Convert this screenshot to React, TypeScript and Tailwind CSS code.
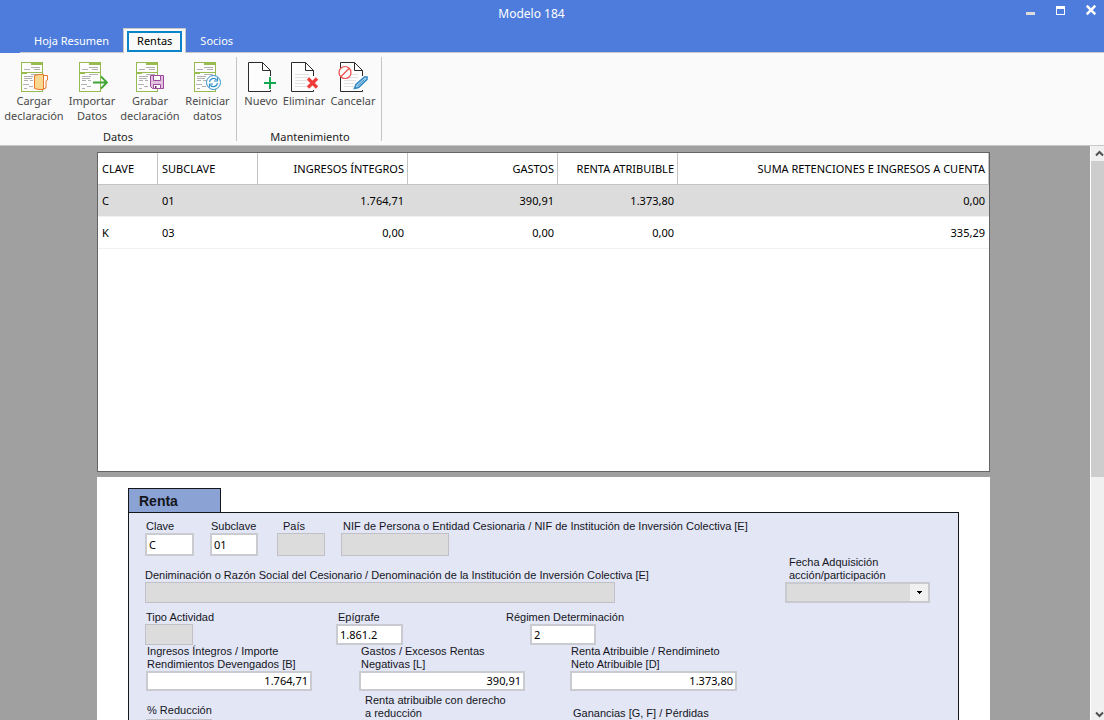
import React, { useState } from "react";

const uiFont = "font-['Noto_Sans',sans-serif]";
const formFont = "font-['Liberation_Sans',Arial,sans-serif]";

function Sheet({ viewBox = "0 0 32 30", children }: { viewBox?: string; children: React.ReactNode }) {
  return (
    <svg width="32" height="30" viewBox={viewBox} fill="none" aria-hidden="true">
      <rect x="3.5" y="0.5" width="21" height="29" fill="#fdfdfd" stroke="#98bb50" />
      <path d="M13 0h12v3H13z M3 10h22v1H3z M3 11h6v1H3z" fill="#98bb50" />
      <path
        d="M13 5.500h9M6 7.500h6M16 7.500h6M13 12.500h9M6 14.500h9M6 16.500h8M6 18.500h4M12 18.500h3M5 22.500h6M11 24.500h4M6 26.500h3"
        stroke="#b0b0b0"
      />
      {children}
    </svg>
  );
}

function BlankPage({ lines, children }: { lines?: boolean; children: React.ReactNode }) {
  return (
    <svg width="32" height="30" viewBox="0 0 32 30" fill="none" aria-hidden="true">
      <path d="M4 1h13l8 8v20H4z" fill="#fdfdfd" />
      <path d="M25.500 14V8.500L17.500 0.500H3.500v29h22V28" stroke="#2b2b2b" />
      <path d="M17.500 0.500v8h8" stroke="#2b2b2b" />
      {lines && <path d="M7 12.500h14M7 15.500h14M7 18.500h12M7 21.500h10M7 24.500h12" stroke="#e2e2e2" />}
      {children}
    </svg>
  );
}

const LoadIcon = () => (
  <Sheet>
    <path d="M25 13.500h4.500v4.500l-1.500 1v7l-3 1" fill="#fdfdfd" stroke="#e8752a" />
    <path d="M16.500 13.500l4.500-1h4.500v15H21l-4.500-1z" fill="#f7d88e" stroke="#e8752a" />
  </Sheet>
);
const ImportIcon = () => (
  <Sheet>
    <path d="M17 20.500h14M25 14.500l6 6-6 6" stroke="#3fa535" strokeWidth="1.800" />
  </Sheet>
);
const SaveIcon = () => (
  <Sheet viewBox="1 0 32 30">
    <path d="M17.500 13.500h13v13h-11l-2-2z" fill="#e3bfe0" stroke="#9c4a9c" />
    <path d="M20.500 13.500h7v5h-7z" fill="#fff" stroke="#9c4a9c" />
    <path d="M20.500 22.500h7v4h-7z" fill="#fff" stroke="#9c4a9c" />
    <path d="M22 24h1.500v2H22z" fill="#6c2a6c" />
  </Sheet>
);
const RefreshIcon = () => (
  <Sheet viewBox="1 0 32 30">
    <circle cx="22.500" cy="20.500" r="7" fill="#fff" stroke="#2f8fcb" />
    <path d="M18.500 20a4 4 0 0 1 7-2.200M26.500 21a4 4 0 0 1-7 2.200" stroke="#2f8fcb" strokeWidth="1.300" />
    <path d="M26.500 15.500v3.500H23M18.500 25.500V22H22" stroke="#2f8fcb" strokeWidth="1.200" />
  </Sheet>
);
const NewIcon = () => (
  <BlankPage>
    <path d="M25 15v12M19 21h12" stroke="#14a850" strokeWidth="2" />
  </BlankPage>
);
const DeleteIcon = () => (
  <BlankPage lines>
    <path d="M20 16.500l9 9M29 16.500l-9 9" stroke="#ee3c38" strokeWidth="3.200" />
  </BlankPage>
);
const CancelIcon = () => (
  <BlankPage lines>
    <circle cx="8" cy="10.500" r="6" fill="#fdfdfd" stroke="#ee4b48" strokeWidth="1.200" />
    <path d="M4 14.500l8-8" stroke="#ee4b48" strokeWidth="1.200" />
    <path d="M17.500 26.500l1.500-4 8.500-7.500 2.500 0v2.500l-8.500 8z" fill="#b9dcf2" stroke="#2d86c4" strokeWidth="1.500" />
    <path d="M20.500 24l7-6.500" stroke="#2d86c4" />
  </BlankPage>
);

type Action = { lines: string[]; icon: React.ReactNode; width: string };

const groups: { title: string; pad: string; titlePad: string; actions: Action[] }[] = [
  {
    title: "Datos",
    pad: "pl-[5px]",
    titlePad: "pr-[5px]",
    actions: [
      { lines: ["Cargar", "declaración"], icon: <LoadIcon />, width: "w-[58px]" },
      { lines: ["Importar", "Datos"], icon: <ImportIcon />, width: "w-[58px]" },
      { lines: ["Grabar", "declaración"], icon: <SaveIcon />, width: "w-[58px]" },
      { lines: ["Reiniciar", "datos"], icon: <RefreshIcon />, width: "w-[57px]" },
    ],
  },
  {
    title: "Mantenimiento",
    pad: "pl-0.5",
    titlePad: "",
    actions: [
      { lines: ["Nuevo"], icon: <NewIcon />, width: "w-[44px]" },
      { lines: ["Eliminar"], icon: <DeleteIcon />, width: "w-[42px]" },
      { lines: ["Cancelar"], icon: <CancelIcon />, width: "w-[56px]" },
    ],
  },
];

const tabs = ["Hoja Resumen", "Rentas", "Socios"];

const columns = [
  { label: "CLAVE", width: "w-[60px]", align: "text-left" },
  { label: "SUBCLAVE", width: "w-[100px]", align: "text-left" },
  { label: "INGRESOS ÍNTEGROS", width: "w-[150px]", align: "text-right" },
  { label: "GASTOS", width: "w-[150px]", align: "text-right" },
  { label: "RENTA ATRIBUIBLE", width: "w-[120px]", align: "text-right" },
  { label: "SUMA RETENCIONES E INGRESOS A CUENTA", width: "", align: "text-right" },
];

const rows = [
  ["C", "01", "1.764,71", "390,91", "1.373,80", "0,00"],
  ["K", "03", "0,00", "0,00", "0,00", "335,29"],
];

type FieldProps = {
  id: string;
  label: React.ReactNode;
  value?: string;
  disabled?: boolean;
  right?: boolean;
  box: string;
  inset?: string;
  input: string;
};

function Field({ id, label, value = "", disabled, right, box, inset = "pl-px", input }: FieldProps) {
  return (
    <div className={`flex shrink-0 flex-col ${box}`}>
      <label htmlFor={id} className={`whitespace-nowrap text-[11px] leading-[13px] text-[#15151c] ${inset}`}>
        {label}
      </label>
      <input
        id={id}
        defaultValue={value}
        disabled={disabled}
        className={`px-0.5 pb-px text-[11px] leading-4 text-black outline-none ${uiFont} ${
          disabled ? "border border-[#c0c0c6] bg-[#dcdcdc]" : "border-2 border-[#cacbd0] bg-white"
        } ${right ? "text-right" : "text-left"} ${input}`}
      />
    </div>
  );
}

export default function App() {
  const [tab, setTab] = useState("Rentas");
  return (
    <div className={`flex h-screen flex-col overflow-hidden bg-[#a0a0a0] ${uiFont}`}>
      <header className="flex h-[53px] shrink-0 flex-col bg-[#4d7cdc] text-white">
        <div className="flex h-7 items-start">
          <h1 className="flex-1 pt-1.5 pl-[38px] text-center text-[12px] leading-4">Modelo 184</h1>
          <div className="flex gap-[18px] pt-1 pr-[7px]">
            <button aria-label="Minimizar" className="flex w-3 justify-center">
              <svg width="10" height="12" viewBox="0 0 10 12"><path d="M0 8h9v3H0z" fill="#dcdcdc" /></svg>
            </button>
            <button aria-label="Maximizar" className="flex w-3 justify-center">
              <svg width="10" height="12" viewBox="0 0 10 12"><path d="M0 2h9v9H0zM1 5v5h7V5z" fill="#fff" fillRule="evenodd" /></svg>
            </button>
            <button aria-label="Cerrar" className="flex w-3 justify-center">
              <svg width="10" height="12" viewBox="0 0 10 12"><path d="M.7 1.700l8.600 8.600M9.300 1.700L.7 10.300" stroke="#fff" strokeWidth="2.400" /></svg>
            </button>
          </div>
        </div>
        <div role="tablist" className="flex h-[25px] items-stretch pl-5 text-[11px] leading-4">
          {tabs.map((name) =>
            name === tab ? (
              <button
                key={name}
                role="tab"
                aria-selected="true"
                className="flex border border-b-0 border-[#c8c8c8] bg-[#fafafa] px-[3px] pt-0.5 text-black"
              >
                <span className="flex h-[21px] items-center border-2 border-[#0a84c8] px-2 pb-px">{name}</span>
              </button>
            ) : (
              <button
                key={name}
                role="tab"
                aria-selected="false"
                onClick={() => setTab(name)}
                className="border-b border-[#c8c8c8] px-[14px] pt-0.5"
              >
                {name}
              </button>
            ),
          )}
          <span className="flex-1 border-b border-[#c8c8c8]" />
        </div>
      </header>

      <div className="flex h-[93px] shrink-0 border-b border-[#c8c8c8] bg-[#fafafa] pt-1 pb-1">
        {groups.map((g) => (
          <section key={g.title} aria-label={g.title} className={`flex flex-col border-r border-[#c4c4c4] ${g.pad}`}>
            <div className="flex flex-1 items-start pt-[5px]">
              {g.actions.map((a) => (
                <button
                  key={a.lines[0]}
                  className={`flex flex-col items-center text-[11px] leading-[15px] text-[#4a4a4a] ${a.width}`}
                >
                  {a.icon}
                  <span className="mt-px flex flex-col items-center whitespace-nowrap">
                    {a.lines.map((l) => (
                      <span key={l}>{l}</span>
                    ))}
                  </span>
                </button>
              ))}
            </div>
            <h2 className={`h-[10px] text-center text-[11px] leading-3 text-[#222] ${g.titlePad}`}>{g.title}</h2>
          </section>
        ))}
      </div>

      <div className="flex min-h-0 flex-1">
        <main className="flex min-w-0 flex-1 flex-col overflow-hidden pt-1.5 pr-[100px] pl-[97px]">
          <div className="h-80 shrink-0 overflow-hidden border border-[#646464] bg-white">
            <table className="w-full table-fixed border-separate border-spacing-0 text-[11px] leading-4 text-black">
              <thead>
                <tr className="h-8">
                  {columns.map((c) => (
                    <th
                      key={c.label}
                      className={`border-r border-b border-[#c4c4c4] pr-[3px] pl-1 font-normal whitespace-nowrap ${c.width} ${c.align}`}
                    >
                      {c.label}
                    </th>
                  ))}
                </tr>
              </thead>
              <tbody>
                {rows.map((r, i) => (
                  <tr key={r[0]} className={`h-8 ${i === 0 ? "bg-[#dcdcdc]" : "bg-white"}`}>
                    {r.map((cell, j) => (
                      <td key={columns[j].label} className={`border-b border-[#f0f0f0] px-1 ${columns[j].align}`}>
                        {cell}
                      </td>
                    ))}
                  </tr>
                ))}
              </tbody>
            </table>
          </div>

          <form className={`mt-[5px] shrink-0 bg-white px-[31px] pt-[11px] ${formFont}`}>
            <h2 className="flex h-6 w-[93px] items-center border border-b-0 border-[#15151c] bg-[#8ba2d4] pl-2.5 text-[14px] leading-4 font-bold text-[#15151c]">
              Renta
            </h2>
            <div className="border border-[#15151c] bg-[#e2e6f5] pt-[7px] pb-10 pl-4">
              <div className="flex">
                <Field id="clave" label="Clave" value="C" box="w-[65px]" input="h-[23px] w-[49px]" />
                <Field id="subclave" label="Subclave" value="01" box="w-[67px]" input="h-[23px] w-12" />
                <Field id="pais" label="País" disabled box="w-16" inset="pl-1.5" input="h-[23px] w-12" />
                <Field
                  id="nif"
                  label="NIF de Persona o Entidad Cesionaria / NIF de Institución de Inversión Colectiva [E]"
                  disabled
                  box="flex-1"
                  inset="pl-0.5"
                  input="h-[23px] w-[108px]"
                />
              </div>
              <div className="flex items-end justify-between pr-7">
                <Field
                  id="denominacion"
                  label="Deniminación o Razón Social del Cesionario / Denominación de la Institución de Inversión Colectiva [E]"
                  disabled
                  box="w-[500px]"
                  inset="pl-0"
                  input="h-[21px] w-[470px]"
                />
                <div className="flex w-[145px] flex-col">
                  <label htmlFor="fecha" className="pl-1 text-[11px] leading-[13px] text-[#15151c]">
                    Fecha Adquisición
                    <br />
                    acción/participación
                  </label>
                  <div className="flex h-[21px] border-2 border-[#c9cacf] bg-[#dcdcdc]">
                    <select id="fecha" disabled className="min-w-0 flex-1 appearance-none outline-none">
                      <option></option>
                    </select>
                    <span className="flex w-[18px] items-center justify-center bg-[#f0f0f0]">
                      <svg width="5" height="3" viewBox="0 0 5 3"><path d="M0 0h5v1H4v1H3v1H2V2H1V1H0z" fill="#000" /></svg>
                    </span>
                  </div>
                </div>
              </div>
              <div className="mt-2 flex">
                <Field id="tipo" label="Tipo Actividad" disabled box="w-[191px]" input="h-[21px] w-12" />
                <Field id="epigrafe" label="Epígrafe" value="1.861.2" box="w-[170px]" inset="pl-0.5" input="h-[21px] w-[67px]" />
                <Field
                  id="regimen"
                  label="Régimen Determinación"
                  value="2"
                  box="w-[130px]"
                  inset="pl-0"
                  input="ml-6 h-[21px] w-[66px]"
                />
              </div>
              <div className="flex pl-px">
                <Field
                  id="ingresos"
                  label={<>Ingresos Íntegros / Importe<br />Rendimientos Devengados [B]</>}
                  value="1.764,71"
                  right
                  box="w-[213px]"
                  input="h-5 w-[166px]"
                />
                <Field
                  id="gastos"
                  label={<>Gastos / Excesos Rentas<br />Negativas [L]</>}
                  value="390,91"
                  right
                  box="w-[211px]"
                  inset="pl-0.5"
                  input="h-5 w-[166px]"
                />
                <Field
                  id="renta"
                  label={<>Renta Atribuible / Rendimineto<br />Neto Atribuible [D]</>}
                  value="1.373,80"
                  right
                  box="w-[166px]"
                  input="h-5 w-[167px]"
                />
              </div>
              <div className="flex pt-[3px] pl-px">
                <Field id="reduccion" label="% Reducción" disabled box="w-[213px] pt-2.5" input="mt-0.5 h-[21px] w-[66px]" />
                <Field
                  id="derecho"
                  label={<>Renta atribuible con derecho<br />a reducción</>}
                  right
                  box="w-[211px]"
                  inset="pl-1.5"
                  input="h-5 w-[166px]"
                />
                <Field
                  id="ganancias"
                  label="Ganancias [G, F] / Pérdidas"
                  right
                  box="w-[166px] pt-[13px]"
                  inset="pl-[3px]"
                  input="h-5 w-[167px]"
                />
              </div>
            </div>
          </form>
        </main>

        <div className="flex w-[14px] shrink-0 flex-col overflow-hidden border-l border-white bg-[#f0f0f0]">
          <button aria-label="Subir" className="h-[15px] shrink-0 pl-1">
            <svg width="9" height="7" viewBox="0 0 9 7" fill="none"><path d="M1 5.500l3.500-3.500L8 5.500" stroke="#505050" strokeWidth="2" /></svg>
          </button>
          <div className="flex-1">
            <div className="h-[58%] bg-[#cdcdcd]" />
          </div>
          <button aria-label="Bajar" className="flex h-[15px] shrink-0 items-end pb-0.5 pl-1">
            <svg width="9" height="7" viewBox="0 0 9 7" fill="none"><path d="M1 1.500L4.500 5 8 1.500" stroke="#505050" strokeWidth="2" /></svg>
          </button>
        </div>
      </div>
    </div>
  );
}
